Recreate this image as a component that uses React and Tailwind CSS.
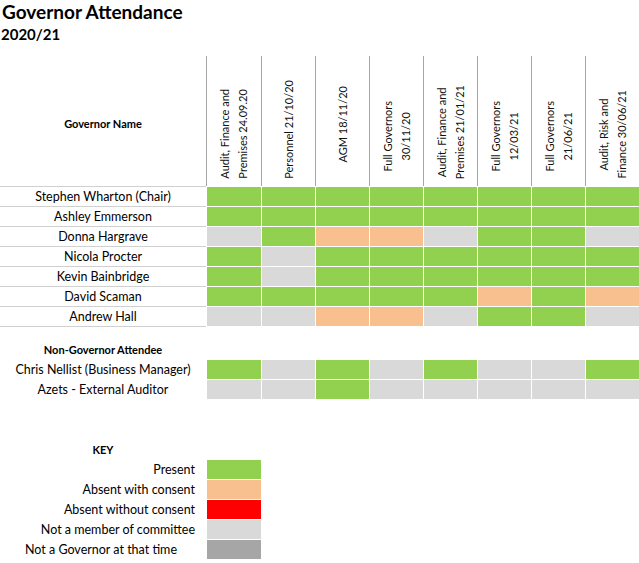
import React from "react";

const COLORS = {
  G: "bg-[#92d050]",
  P: "bg-[#f8bf8f]",
  R: "bg-[#ff0000]",
  L: "bg-[#d9d9d9]",
  D: "bg-[#a6a6a6]",
};

const headers = [
  { lines: ["Audit, Finance and", "Premises 24.09.20"], pb: "pb-[7px]", w: "w-[55px]" },
  { lines: ["Personnel 21/10/20"], pb: "pb-[7px]", w: "w-[54px]" },
  { lines: ["AGM 18/11/20"], pb: "pb-[23px]", w: "w-[54px]" },
  { lines: ["Full Governors", "30/11/20"], pb: "pb-[15px]", w: "w-[54px]" },
  { lines: ["Audit, Finance and", "Premises 21/01/21"], pb: "pb-[7px]", w: "w-[54px]" },
  { lines: ["Full Governors", "12/03/21"], pb: "pb-[15px]", w: "w-[54px]" },
  { lines: ["Full Governors", "21/06/21"], pb: "pb-[15px]", w: "w-[54px]" },
  { lines: ["Audit, Risk and", "Finance 30/06/21"], pb: "pb-[7px]", w: "w-[54px]" },
];

const widths = headers.map((h) => h.w);

const governors = [
  ["Stephen Wharton (Chair)", "GGGGGGGG"],
  ["Ashley Emmerson", "GGGGGGGG"],
  ["Donna Hargrave", "LGPPLGGL"],
  ["Nicola Procter", "GLGGGGGG"],
  ["Kevin Bainbridge", "GLGGGGGG"],
  ["David Scaman", "GGGGGPGP"],
  ["Andrew Hall", "LLPPLGGL"],
];

const others = [
  ["Chris Nellist (Business Manager)", "GLGLGLLG"],
  ["Azets - External Auditor", "LLGLLLLL"],
];

const keyItems = [
  ["Present", "G", "pr-[11px]"],
  ["Absent with consent", "P", "pr-[11px]"],
  ["Absent without consent", "R", "pr-[11px]"],
  ["Not a member of committee", "L", "pr-[11px]"],
  ["Not a Governor at that time", "D", "pr-[29px]"],
];

function Cells({ codes }) {
  return codes.split("").map((c, i) => (
    <div key={i} className={`${widths[i]} h-full border-l border-white ${COLORS[c]}`} />
  ));
}

export default function App() {
  return (
    <div className="w-[639px] h-[563px] overflow-hidden bg-white text-black font-['Lato',sans-serif]">
      <div className="pl-[2px] text-[19px] font-bold leading-[23px]">Governor Attendance</div>
      <div className="pl-[1px] mt-[2px] text-[15px] font-bold leading-[18px]">2020/21</div>

      {/* header */}
      <div className="mt-[13px] flex h-[130px]">
        <div className="w-[206px] flex items-center justify-center pt-[6px] text-[11px] font-bold">
          Governor Name
        </div>
        {headers.map((h, i) => (
          <div
            key={i}
            className={`${h.w} border-l border-[#a6a6a6] flex flex-col items-center justify-end ${h.pb}`}
          >
            <div className="[writing-mode:vertical-rl] rotate-180 text-center text-[11px] leading-[18px] whitespace-nowrap text-[#111]">
              {h.lines.map((l, j) => (
                <div key={j}>{l}</div>
              ))}
            </div>
          </div>
        ))}
      </div>

      {/* governors */}
      <div className="flex flex-col">
        {governors.map(([name, codes]) => (
          <div key={name} className="flex h-[20px] border-t border-white">
            <div className="w-[206px] -mt-px border-t border-[#d0d0d0] text-center text-[12.5px] leading-[19px]">
              {name}
            </div>
            <Cells codes={codes} />
          </div>
        ))}
        <div className="w-[206px] h-px bg-[#d0d0d0]" />
      </div>

      {/* non-governor */}
      <div className="mt-[14px] w-[206px] h-[18px] text-center text-[11px] font-bold leading-[18px]">
        Non-Governor Attendee
      </div>
      <div className="flex flex-col">
        {others.map(([name, codes]) => (
          <div key={name} className="flex h-[20px] border-t border-white">
            <div className="w-[206px] text-center text-[12.5px] leading-[19px]">{name}</div>
            <Cells codes={codes} />
          </div>
        ))}
      </div>

      {/* key */}
      <div className="mt-[42px] w-[206px] h-[18px] text-center text-[11px] font-bold leading-[18px]">
        KEY
      </div>
      <div className="flex flex-col">
        {keyItems.map(([label, c, pr]) => (
          <div key={label} className="flex h-[20px] border-t border-white">
            <div className={`w-[206px] text-right text-[12.5px] leading-[19px] ${pr}`}>{label}</div>
            <div className={`w-[55px] h-full border-l border-white ${COLORS[c]}`} />
          </div>
        ))}
      </div>
    </div>
  );
}
